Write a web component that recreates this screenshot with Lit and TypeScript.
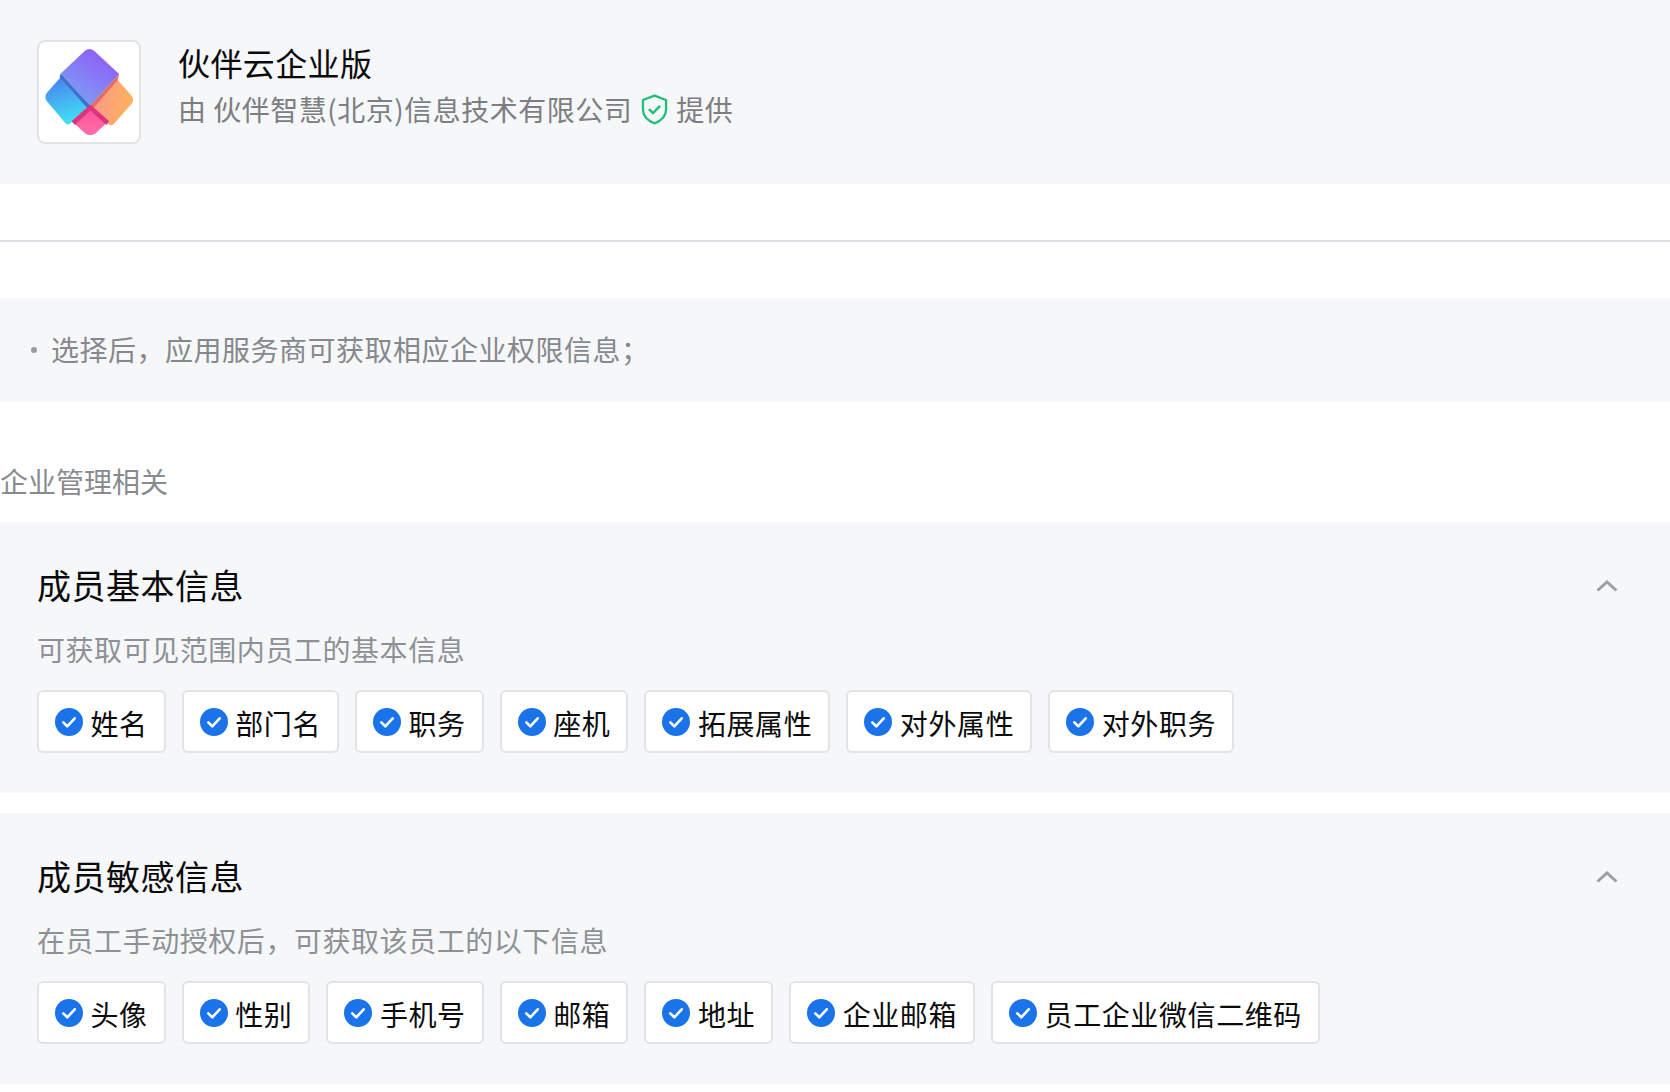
import { LitElement, html, css, svg } from "lit";
import { customElement } from "lit/decorators.js";

const check = html`<svg class="check" viewBox="0 0 28 28" aria-hidden="true">
  <circle cx="14" cy="14" r="14" fill="#1a73e8"></circle>
  <path d="M8.3 14.4l4 3.9 7.4-8" fill="none" stroke="#fff" stroke-width="2.6" stroke-linecap="round" stroke-linejoin="round"></path>
</svg>`;

const logo = html`<svg class="logo-svg" viewBox="58 36 296 298" aria-hidden="true">
  <defs>
    <linearGradient id="gTop" x1="0.75" y1="0.1" x2="0.25" y2="0.9"><stop offset="0" stop-color="#8f5ff8"></stop><stop offset="1" stop-color="#7b9df3"></stop></linearGradient>
    <linearGradient id="gLeft" x1="0.3" y1="0" x2="0.6" y2="1"><stop offset="0" stop-color="#4a82ee"></stop><stop offset="1" stop-color="#3fe6f6"></stop></linearGradient>
    <linearGradient id="gRight" x1="0" y1="0.4" x2="1" y2="0.6"><stop offset="0" stop-color="#fb958f"></stop><stop offset="1" stop-color="#ffb45a"></stop></linearGradient>
    <linearGradient id="gBottom" x1="0.5" y1="0" x2="0.5" y2="1"><stop offset="0" stop-color="#ff4f9e"></stop><stop offset="1" stop-color="#ff6fa8"></stop></linearGradient>
  </defs>
  ${svg`
    <path d="M122 140 L80 188 Q72 200 80 212 L136 278 Q143 286 150 279 L210 225 Z" fill="url(#gLeft)"></path>
    <path d="M289 146 L333 196 Q342 207 333 220 L280 280 Q272 288 264 280 L210 225 Z" fill="url(#gRight)"></path>
    <path d="M210 225 L263 273 L226 308 Q210 320 194 308 L156 273 Z" fill="url(#gBottom)"></path>
    <path d="M122 130 L194 62 Q207 52 221 62 L296 131 L210 226 Z" fill="url(#gTop)"></path>
    <path d="M122 130 L210 226 L202 234 L118 140 Z" fill="#3f70cf"></path>
    <path d="M296 131 L210 226 L218 234 L291 150 Z" fill="#e26c62"></path>
    <path d="M210 222 L266 272 L258 283 L210 240 L164 283 L154 272 Z" fill="#e0337f"></path>
  `}
</svg>`;

const chevron = html`<svg class="chev" viewBox="0 0 22 12" aria-hidden="true">
  <path d="M1.5 10.5L11 2l9.5 8.5" fill="none" stroke="#9d9fa2" stroke-width="3"></path>
</svg>`;

const shield = html`<svg class="shield" viewBox="0 0 26 30" aria-hidden="true">
  <path d="M13 1.6L24.2 5.8V15c0 6.4-4.6 10.8-11.2 13.4C6.4 25.8 1.8 21.4 1.8 15V5.8Z" fill="none" stroke="#1fbf78" stroke-width="2.2" stroke-linejoin="round"></path>
  <path d="M7.6 14.6l4 3.9 6.8-7" fill="none" stroke="#1fbf78" stroke-width="2.4"></path>
</svg>`;

const sections = [
  { title: "成员基本信息", sub: "可获取可见范围内员工的基本信息", tags: ["姓名", "部门名", "职务", "座机", "拓展属性", "对外属性", "对外职务"] },
  { title: "成员敏感信息", sub: "在员工手动授权后，可获取该员工的以下信息", tags: ["头像", "性别", "手机号", "邮箱", "地址", "企业邮箱", "员工企业微信二维码"] },
];

@customElement("app-root")
export class AppRoot extends LitElement {
  static styles = css`
    :host { display: block; width: 1670px; height: 1092px; background: #fff; font-family: "Noto Sans CJK SC", "Noto Sans", sans-serif; overflow: hidden; }
    .header { height: 184px; box-sizing: border-box; background: #f6f7f9; display: flex; align-items: center; padding-left: 37px; gap: 37px; }
    .logo { width: 104px; height: 104px; box-sizing: border-box; background: #fff; border: 2px solid #e1e2e4; border-radius: 8px; display: flex; margin-top: -1px; }
    .logo-svg { width: 100%; height: 100%; }
    .meta { display: flex; flex-direction: column; gap: 7px; margin-top: -14px; }
    .name { font-size: 32px; line-height: 40px; color: #0a0a0a; letter-spacing: 0.4px; }
    .by { font-size: 28px; line-height: 40px; color: #7d7e81; letter-spacing: 0.5px; display: flex; align-items: center; white-space: pre; }
    .shield { width: 27px; height: 31px; margin: 1px 8px 0 9px; }
    .divider { height: 2px; background: #e0e1e6; margin: 56px 0; }
    .note { height: 104px; background: #f6f7f9; display: flex; align-items: center; padding-left: 31px; font-size: 28px; letter-spacing: 0.5px; color: #85888c; }
    .note-text { position: relative; top: -1px; }
    .dot { width: 6px; height: 6px; border-radius: 50%; background: #9a9ca0; margin-right: 14px; }
    .label { font-size: 28px; line-height: 40px; color: #878b90; margin: 59px 0 21px; }
    .card { height: 270.5px; box-sizing: border-box; background: #f6f7f9; padding: 39px 37px 0; margin-bottom: 20.5px; }
    .row { display: flex; justify-content: space-between; align-items: center; height: 48px; }
    .title { font-size: 34px; line-height: 48px; color: #0a0a0a; letter-spacing: 0.5px; }
    .chev { width: 22px; height: 12px; margin-right: 15px; margin-top: 2px; }
    .sub { font-size: 28px; line-height: 40px; color: #8d9196; margin-top: 20px; letter-spacing: 0.55px; }
    .tags { display: flex; gap: 16px; margin-top: 21px; }
    .tag { height: 63px; box-sizing: border-box; background: #fff; border: 2px solid #e2e3e5; border-radius: 6px; display: flex; align-items: center; gap: 7.5px; padding: 0 16px; font-size: 28px; letter-spacing: 0.6px; color: #0a0a0a; }
    .check { width: 28px; height: 28px; flex: none; }
    .tag span { position: relative; top: 1px; }
  `;

  render() {
    return html`
      <div class="header">
        <div class="logo">${logo}</div>
        <div class="meta">
          <div class="name">伙伴云企业版</div>
          <div class="by">由 伙伴智慧(北京)信息技术有限公司${shield}提供</div>
        </div>
      </div>
      <div class="divider"></div>
      <div class="note"><i class="dot"></i><span class="note-text">选择后，应用服务商可获取相应企业权限信息；</span></div>
      <div class="label">企业管理相关</div>
      ${sections.map(
        (s) => html`
          <section class="card">
            <div class="row"><div class="title">${s.title}</div>${chevron}</div>
            <div class="sub">${s.sub}</div>
            <div class="tags">
              ${s.tags.map((t) => html`<div class="tag">${check}<span>${t}</span></div>`)}
            </div>
          </section>
        `
      )}
    `;
  }
}
